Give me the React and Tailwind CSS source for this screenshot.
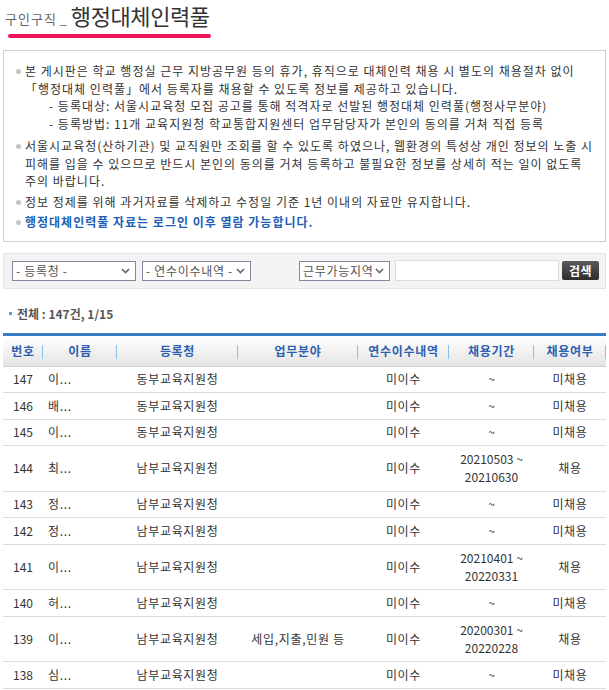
import React from "react"

const rows = [
  { no: 147, name: '이...', office: '동부교육지원청', field: '', edu: '미이수', period: null, hired: '미채용' },
  { no: 146, name: '배...', office: '동부교육지원청', field: '', edu: '미이수', period: null, hired: '미채용' },
  { no: 145, name: '이...', office: '동부교육지원청', field: '', edu: '미이수', period: null, hired: '미채용' },
  { no: 144, name: '최...', office: '남부교육지원청', field: '', edu: '미이수', period: ['20210503 ~', '20210630'], hired: '채용' },
  { no: 143, name: '정...', office: '남부교육지원청', field: '', edu: '미이수', period: null, hired: '미채용' },
  { no: 142, name: '정...', office: '남부교육지원청', field: '', edu: '미이수', period: null, hired: '미채용' },
  { no: 141, name: '이...', office: '남부교육지원청', field: '', edu: '미이수', period: ['20210401 ~', '20220331'], hired: '채용' },
  { no: 140, name: '허...', office: '남부교육지원청', field: '', edu: '미이수', period: null, hired: '미채용' },
  { no: 139, name: '이...', office: '남부교육지원청', field: '세입,지출,민원 등', edu: '미이수', period: ['20200301 ~', '20220228'], hired: '채용' },
  { no: 138, name: '심...', office: '남부교육지원청', field: '', edu: '미이수', period: null, hired: '미채용' },
]

const cols = "grid grid-cols-[40px_74px_121px_120px_91px_85px_72px]"

const Chevron = () => (
  <svg width="9" height="6" viewBox="0 0 9 6" className="shrink-0">
    <path d="M1 1 L4.5 4.5 L8 1" fill="none" stroke="#666" strokeWidth="1.6" />
  </svg>
)

const FakeSelect = ({ label, className }) => (
  <div className={`flex items-center justify-between h-[20px] border border-[#7f8b9c] bg-white pl-[3px] pr-[5px] text-[12px] text-[#555] ${className}`}>
    <span className="whitespace-nowrap">{label}</span>
    <Chevron />
  </div>
)

const Bullet = () => (
  <span className="w-[5px] h-[5px] rounded-full bg-[#c4c4c4] mt-[7px] mr-[4px] ml-[12px] shrink-0" />
)

const HeadCell = ({ children }) => (
  <div className="relative flex items-center justify-center h-full">
    <span>{children}</span>
    <span className="absolute right-0 top-[9px] w-px h-[14px] bg-[#8cc0e6]" />
  </div>
)

const App = () => {
  return (
    <div className="w-[609px] bg-white px-[3px] text-[#333] tracking-[0.7px]" style={{ fontFamily: '"Noto Sans CJK KR", "Noto Sans", sans-serif' }}>

      {/* titulo */}
      <div className="pt-[1px] pl-[2px]">
        <div className="flex items-end h-[28px] whitespace-nowrap">
          <span className="text-[13px] text-[#666] leading-[20px] tracking-[1px]">구인구직</span>
          <span className="text-[13px] text-[#666] leading-[20px] ml-[3px] mr-[3px]">_</span>
          <span className="text-[22px] text-[#333] leading-[28px] tracking-[-0.4px]">행정대체인력풀</span>
        </div>
        <div className="mt-[5px] ml-[3px] w-[203px] h-[4px] rounded-full bg-[#f01358]" />
      </div>

      {/* aviso */}
      <div className="mt-[12px] border border-[#cfcfcf] pt-[11px] pb-[10px] text-[12px] leading-[17.5px] text-[#333] tracking-[1px]">
        <div className="flex">
          <Bullet />
          <div className="whitespace-nowrap">
            <div>본 게시판은 학교 행정실 근무 지방공무원 등의 휴가, 휴직으로 대체인력 채용 시 별도의 채용절차 없이</div>
            <div>「행정대체 인력풀」에서 등록자를 채용할 수 있도록 정보를 제공하고 있습니다.</div>
            <div className="pl-[24px]">- 등록대상: 서울시교육청 모집 공고를 통해 적격자로 선발된 행정대체 인력풀(행정사무분야)</div>
            <div className="pl-[24px]">- 등록방법: 11개 교육지원청 학교통합지원센터 업무담당자가 본인의 동의를 거쳐 직접 등록</div>
          </div>
        </div>
        <div className="flex mt-[5px]">
          <Bullet />
          <div className="whitespace-nowrap">
            <div>서울시교육청(산하기관) 및 교직원만 조회를 할 수 있도록 하였으나, 웹환경의 특성상 개인 정보의 노출 시</div>
            <div>피해를 입을 수 있으므로 반드시 본인의 동의를 거쳐 등록하고 불필요한 정보를 상세히 적는 일이 없도록</div>
            <div>주의 바랍니다.</div>
          </div>
        </div>
        <div className="flex mt-[3px]">
          <Bullet />
          <div className="whitespace-nowrap">정보 정제를 위해 과거자료를 삭제하고 수정일 기준 1년 이내의 자료만 유지합니다.</div>
        </div>
        <div className="flex mt-[3px]">
          <Bullet />
          <div className="whitespace-nowrap font-bold text-[#2160b6]">행정대체인력풀 자료는 로그인 이후 열람 가능합니다.</div>
        </div>
      </div>

      {/* buscador */}
      <div className="mt-[11px] flex items-center h-[36px] border border-[#e4e4e4] bg-[#f3f3f3] pl-[8px]">
        <FakeSelect label="- 등록청 -" className="w-[124px]" />
        <FakeSelect label="- 연수이수내역 -" className="w-[109px] ml-[6px]" />
        <FakeSelect label="근무가능지역" className="w-[91px] ml-[48px]" />
        <div className="ml-[5px] w-[164px] h-[21px] border border-[#dcdcdc] bg-white" />
        <button className="ml-[3px] w-[37px] h-[19px] rounded-[2px] bg-gradient-to-b from-[#5a5a5a] to-[#2e2e2e] text-white text-[12px] font-bold leading-[19px] tracking-[0.5px]">검색</button>
      </div>

      {/* total */}
      <div className="mt-[16px] flex items-center pl-[6px] text-[12px] font-bold text-[#555] leading-[18px] tracking-normal">
        <span className="w-[3px] h-[3px] bg-[#5aa0d8] mr-[5px]" />
        <span>전체 : 147건, 1/15</span>
      </div>

      {/* tabla */}
      <div className="mt-[10px] border-t-[3px] border-[#3a7cc3]">
        <div className={`${cols} h-[31px] bg-gradient-to-b from-white to-[#e4e4e4] border-b border-[#d0d0d0] text-[12px] font-bold text-[#2e5fae]`}>
          <HeadCell>번호</HeadCell>
          <HeadCell>이름</HeadCell>
          <HeadCell>등록청</HeadCell>
          <HeadCell>업무분야</HeadCell>
          <HeadCell>연수이수내역</HeadCell>
          <HeadCell>채용기간</HeadCell>
          <HeadCell>채용여부</HeadCell>
        </div>
        {rows.map(r => (
          <div key={r.no} className={`${cols} ${r.period ? 'h-[45.5px]' : 'h-[26.5px]'} border-b border-[#dddddd] text-[12px] text-[#333] items-center`}>
            <div className="text-center tracking-normal">{r.no}</div>
            <div className="pl-[5px]">{r.name}</div>
            <div className="text-center">{r.office}</div>
            <div className="text-center">{r.field}</div>
            <div className="text-center">{r.edu}</div>
            <div className="text-center leading-[18px] tracking-normal">
              {r.period ? (<><div>{r.period[0]}</div><div>{r.period[1]}</div></>) : '~'}
            </div>
            <div className="text-center">{r.hired}</div>
          </div>
        ))}
      </div>
    </div>
  )
}

export default App
